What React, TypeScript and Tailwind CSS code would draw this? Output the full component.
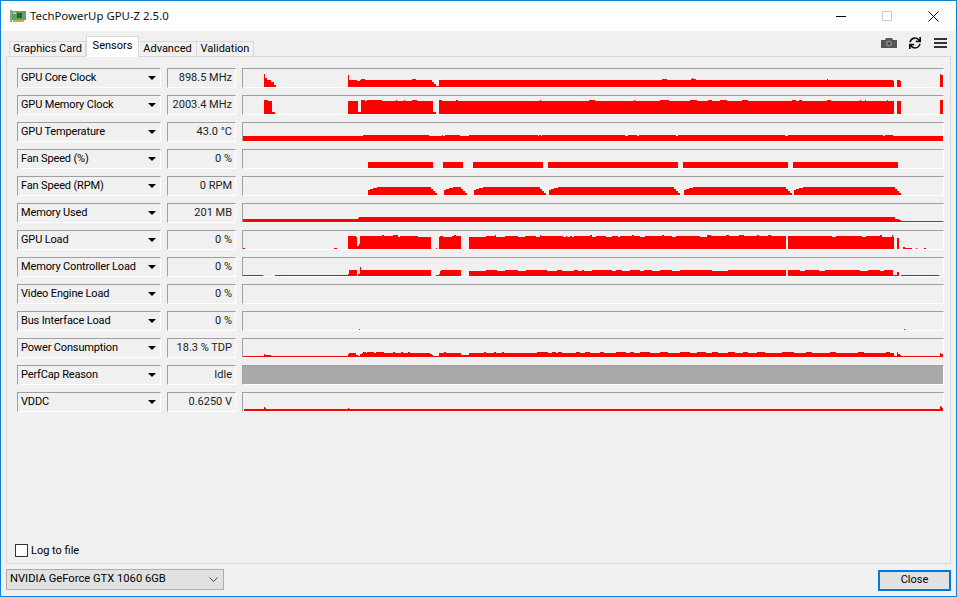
import { FaSync } from 'react-icons/fa';

type Seg = [number, number, number];

// ramps on both ends of a fan curve block
function hump(x0: number, x1: number, h: number): Seg[] {
  return [
    [x0, x0 + 2, h - 3],
    [x0 + 2, x0 + 5, h - 2],
    [x0 + 5, x0 + 9, h - 1],
    [x0 + 9, x1 - 6, h],
    [x1 - 6, x1 - 4, h - 2],
    [x1 - 4, x1 - 2, h - 4],
    [x1 - 2, x1, h - 6],
  ];
}

const up = (h: number, spans: [number, number][]): Seg[] => spans.map(([a, b]) => [a, b, h]);

const sensors: { name: string; value: string; segs: Seg[]; idle?: boolean }[] = [
  {
    name: 'GPU Core Clock',
    value: '898.5 MHz',
    segs: [
      [264, 265, 13], [265, 267, 9], [267, 271, 7], [271, 274, 5], [274, 276, 2],
      [348, 349, 12], [349, 357, 7], [357, 360, 6], [360, 361, 7], [361, 365, 8], [365, 432, 7],
      [412, 416, 8], [432, 434, 5], [434, 436, 3], [436, 439, 1],
      [439, 893, 7], [662, 667, 8], [691, 696, 8], [692, 693, 9], [827, 828, 8], [893, 894, 6],
      [897, 900, 7], [900, 901, 6], [940, 941, 13], [941, 943, 12],
    ],
  },
  {
    name: 'GPU Memory Clock',
    value: '2003.4 MHz',
    segs: [
      [264, 268, 14], [268, 272, 13], [272, 275, 2],
      [348, 358, 13], [358, 361, 2], [361, 433, 13], [433, 436, 2],
      [439, 894, 13],
      ...up(14, [[361, 365], [367, 382], [396, 397], [404, 405], [412, 417], [439, 442], [456, 458], [540, 541], [589, 595], [634, 635], [660, 669], [690, 697], [708, 712], [720, 727], [742, 748], [792, 796], [799, 802], [827, 831], [860, 861], [865, 866], [887, 888]]),
      [897, 901, 13], [940, 943, 14],
    ],
  },
  {
    name: 'GPU Temperature',
    value: '43.0 °C',
    segs: [
      [243, 943, 5],
      ...up(6, [[363, 429], [442, 443], [445, 460], [469, 538], [539, 541], [542, 625], [628, 637], [639, 676], [678, 785], [788, 883], [885, 893]]),
    ],
  },
  {
    name: 'Fan Speed (%)',
    value: '0 %',
    segs: up(6, [[368, 433], [443, 463], [473, 543], [548, 678], [683, 788], [793, 898]]),
  },
  {
    name: 'Fan Speed (RPM)',
    value: '0 RPM',
    segs: [...hump(368, 437, 8), ...hump(444, 467, 8), ...hump(474, 546, 8), ...hump(549, 680, 8), ...hump(684, 792, 8), ...hump(794, 901, 8)],
  },
  {
    name: 'Memory Used',
    value: '201 MB',
    segs: [[243, 358, 3], [358, 359, 4], [359, 895, 5], [895, 899, 3], [899, 901, 2], [901, 943, 1]],
  },
  {
    name: 'GPU Load',
    value: '0 %',
    segs: [
      [243, 245, 1], [334, 337, 1], [348, 356, 13], [356, 357, 12], [357, 359, 3], [359, 360, 5],
      [360, 431, 12], [436, 437, 1], [439, 461, 12], [469, 786, 12], [788, 894, 12],
      ...up(13, [[360, 381], [381, 383], [383, 396], [400, 418], [440, 443], [452, 461], [486, 496], [505, 518], [525, 536], [540, 563], [566, 567], [570, 572], [574, 590], [596, 606], [612, 618], [620, 640], [645, 672], [676, 700], [707, 786], [788, 832], [836, 862], [866, 880]]),
      ...up(14, [[382, 384], [393, 398], [454, 456], [495, 496], [540, 541], [590, 592], [632, 634], [662, 664], [707, 711], [726, 729], [739, 744], [757, 759], [768, 771], [880, 882], [892, 893]]),
      [897, 899, 11], [903, 905, 2], [905, 912, 1], [916, 917, 1], [924, 926, 1],
    ],
  },
  {
    name: 'Memory Controller Load',
    value: '0 %',
    segs: [
      [243, 263, 1], [275, 348, 1], [348, 349, 2], [349, 357, 6], [351, 354, 5], [358, 360, 2], [360, 361, 9],
      [361, 431, 6], [436, 439, 1], [439, 440, 2], [440, 441, 5], [441, 461, 6],
      [469, 786, 5], [788, 893, 5],
      ...up(6, [[486, 497], [505, 518], [526, 547], [557, 562], [574, 578], [582, 584], [592, 612], [616, 622], [630, 640], [644, 652], [660, 672], [680, 700], [700, 712], [728, 786], [788, 800], [805, 819], [825, 860], [868, 880], [884, 893]]),
      [893, 897, 1], [897, 899, 4], [901, 939, 1],
    ],
  },
  { name: 'Video Engine Load', value: '0 %', segs: [] },
  { name: 'Bus Interface Load', value: '0 %', segs: [[359, 360, 1], [904, 905, 1]] },
  {
    name: 'Power Consumption',
    value: '18.3 % TDP',
    segs: [
      [243, 264, 1], [264, 265, 3], [265, 271, 2], [271, 348, 1], [348, 349, 3], [349, 356, 4], [356, 358, 2], [358, 360, 1],
      [360, 362, 3], [362, 430, 4], [430, 432, 3], [432, 433, 2], [433, 439, 1], [439, 461, 4], [461, 469, 2],
      [469, 894, 4], [894, 897, 1],
      ...up(5, [[363, 366], [367, 374], [376, 384], [393, 395], [401, 403], [408, 410], [444, 446], [484, 486], [494, 496], [502, 504], [537, 548], [552, 556], [558, 562], [576, 580], [585, 590], [600, 604], [616, 626], [630, 634], [640, 650], [660, 668], [680, 690], [697, 706], [712, 718], [728, 735], [743, 748], [757, 765], [782, 794], [806, 812], [830, 836], [858, 864], [886, 890]]),
      [897, 898, 5], [898, 900, 3], [900, 901, 2], [901, 940, 1], [940, 941, 4], [941, 943, 3],
    ],
  },
  { name: 'PerfCap Reason', value: 'Idle', segs: [], idle: true },
  {
    name: 'VDDC',
    value: '0.6250 V',
    segs: [[244, 943, 2], [264, 265, 4], [265, 266, 3], [348, 349, 3], [940, 941, 5], [941, 942, 4], [942, 943, 3]],
  },
];

function SensorGraph({ segs, idle }: { segs: Seg[]; idle?: boolean }) {
  return (
    <div className={`flex-1 h-5 border border-t-[#a0a0a0] border-l-[#a0a0a0] border-r-white border-b-white ${idle ? 'bg-[#a9a9a9]' : 'bg-[#f0f0f0]'}`}>
      <svg width="700" height="18" className="block" shapeRendering="crispEdges">
        {segs.map(([a, b, h], i) => (
          <rect key={i} x={a - 243} y={18 - h} width={b - a} height={h} fill="#ff0000" />
        ))}
      </svg>
    </div>
  );
}

function SensorRow({ name, value, segs, idle }: { name: string; value: string; segs: Seg[]; idle?: boolean }) {
  return (
    <div className="flex gap-[6px] h-5">
      <div className="w-[144px] h-5 flex items-center justify-between pl-[3px] pr-[4px] border border-t-[#a0a0a0] border-l-[#a0a0a0] border-r-white border-b-white">
        <span className="whitespace-nowrap tracking-[-0.15px]">{name}</span>
        <svg width="8" height="4" viewBox="0 0 8 4">
          <path d="M0 0h8L4 4z" fill="#000" />
        </svg>
      </div>
      <div className="w-[69px] h-5 flex items-center justify-end pr-[3px] whitespace-nowrap text-[#222] border border-t-[#a0a0a0] border-l-[#a0a0a0] border-r-white border-b-white">
        {value}
      </div>
      <SensorGraph segs={segs} idle={idle} />
    </div>
  );
}

function Tab({ label, width, active }: { label: string; width: string; active?: boolean }) {
  if (active) {
    return (
      <div className={`${width} h-[21px] -mb-px z-10 pb-[1px] flex items-center justify-center bg-white border border-b-0 border-[#d9d9d9]`}>{label}</div>
    );
  }
  return <div className={`${width} h-[15px] flex items-center justify-center bg-[#f0f0f0] border border-b-0 border-[#d9d9d9] -ml-px first:ml-0`}>{label}</div>;
}

export default function App() {
  return (
    <div className="w-[957px] h-[597px] flex flex-col border border-[#0c7fd6] bg-[#f0f0f0] text-[11px] text-black font-['Roboto',sans-serif] overflow-hidden">
      {/* title bar */}
      <div className="h-[30px] shrink-0 flex items-center bg-white">
        <svg width="16" height="14" viewBox="0 0 16 14" className="ml-[9px] mr-[4px]">
          <rect x="0" y="1" width="2" height="12" fill="#9a9a9a" />
          <rect x="2" y="2" width="14" height="9" fill="#5aa564" />
          <rect x="7" y="4" width="5" height="5" fill="#2f5f38" />
          <rect x="3" y="3" width="3" height="2" fill="#a8d2a0" />
          <rect x="3" y="11" width="11" height="2" fill="#c9b04e" />
        </svg>
        <span className="font-['Noto_Sans',sans-serif] text-[11.4px] text-[#111]">TechPowerUp GPU-Z 2.5.0</span>
        <div className="ml-auto flex items-center">
          <div className="w-[46px] flex justify-center">
            <div className="w-[10px] h-px bg-black" />
          </div>
          <div className="w-[46px] flex justify-center">
            <div className="w-[10px] h-[10px] border border-[#cccccc]" />
          </div>
          <div className="w-[46px] flex justify-center">
            <svg width="11" height="11" viewBox="0 0 11 11">
              <path d="M0.5 0.5l10 10M10.5 0.5l-10 10" stroke="#000" strokeWidth="1" fill="none" />
            </svg>
          </div>
        </div>
      </div>

      {/* tab strip + toolbar */}
      <div className="h-[25px] shrink-0 flex items-end pl-[8px] pr-[9px]">
        <Tab label="Graphics Card" width="w-[77px]" />
        <Tab label="Sensors" width="w-[53px]" active />
        <Tab label="Advanced" width="w-[59px]" />
        <Tab label="Validation" width="w-[58px]" />
        <div className="ml-auto flex items-center self-start pt-[6px]">
          <svg width="16" height="10" viewBox="0 0 16 10">
            <path d="M0 2h4l1-2h6l1 2h4v8H0z" fill="#555" />
            <circle cx="8" cy="5.5" r="3" fill="#8a8a8a" />
            <circle cx="8" cy="5.5" r="1.5" fill="#444" />
          </svg>
          <FaSync size={12} color="#111" className="ml-[12px]" />
          <div className="flex flex-col gap-[2px] ml-[13px]">
            <div className="w-[13px] h-[2px] bg-[#333]" />
            <div className="w-[13px] h-[2px] bg-[#333]" />
            <div className="w-[13px] h-[2px] bg-[#333]" />
          </div>
        </div>
      </div>

      {/* sensors panel */}
      <div className="mx-[5px] h-[508px] shrink-0 flex flex-col border border-[#d9d9d9] pt-[11px] pl-[10px] pr-[6px] pb-[4px]">
        <div className="flex flex-col gap-[7px]">
          {sensors.map((s) => (
            <SensorRow key={s.name} name={s.name} value={s.value} segs={s.segs} idle={s.idle} />
          ))}
        </div>
        <div className="mt-auto -ml-[2px] flex items-center gap-[3px]">
          <div className="w-[13px] h-[13px] bg-white border border-[#333]" />
          <span>Log to file</span>
        </div>
      </div>

      {/* footer */}
      <div className="mx-[5px] mt-[5px] flex justify-between">
        <div className="w-[218px] h-[21px] flex items-center justify-between pl-[3px] pr-[5px] bg-[#e1e1e1] border border-[#adadad]">
          <span className="text-[11.2px]">NVIDIA GeForce GTX 1060 6GB</span>
          <svg width="9" height="5" viewBox="0 0 9 5">
            <path d="M0.5 0.5l4 4 4-4" stroke="#444" fill="none" />
          </svg>
        </div>
        <div className="w-[73px] h-[21px] mt-px flex items-center justify-center bg-[#e1e1e1] border-2 border-[#0078d7]">Close</div>
      </div>
    </div>
  );
}
